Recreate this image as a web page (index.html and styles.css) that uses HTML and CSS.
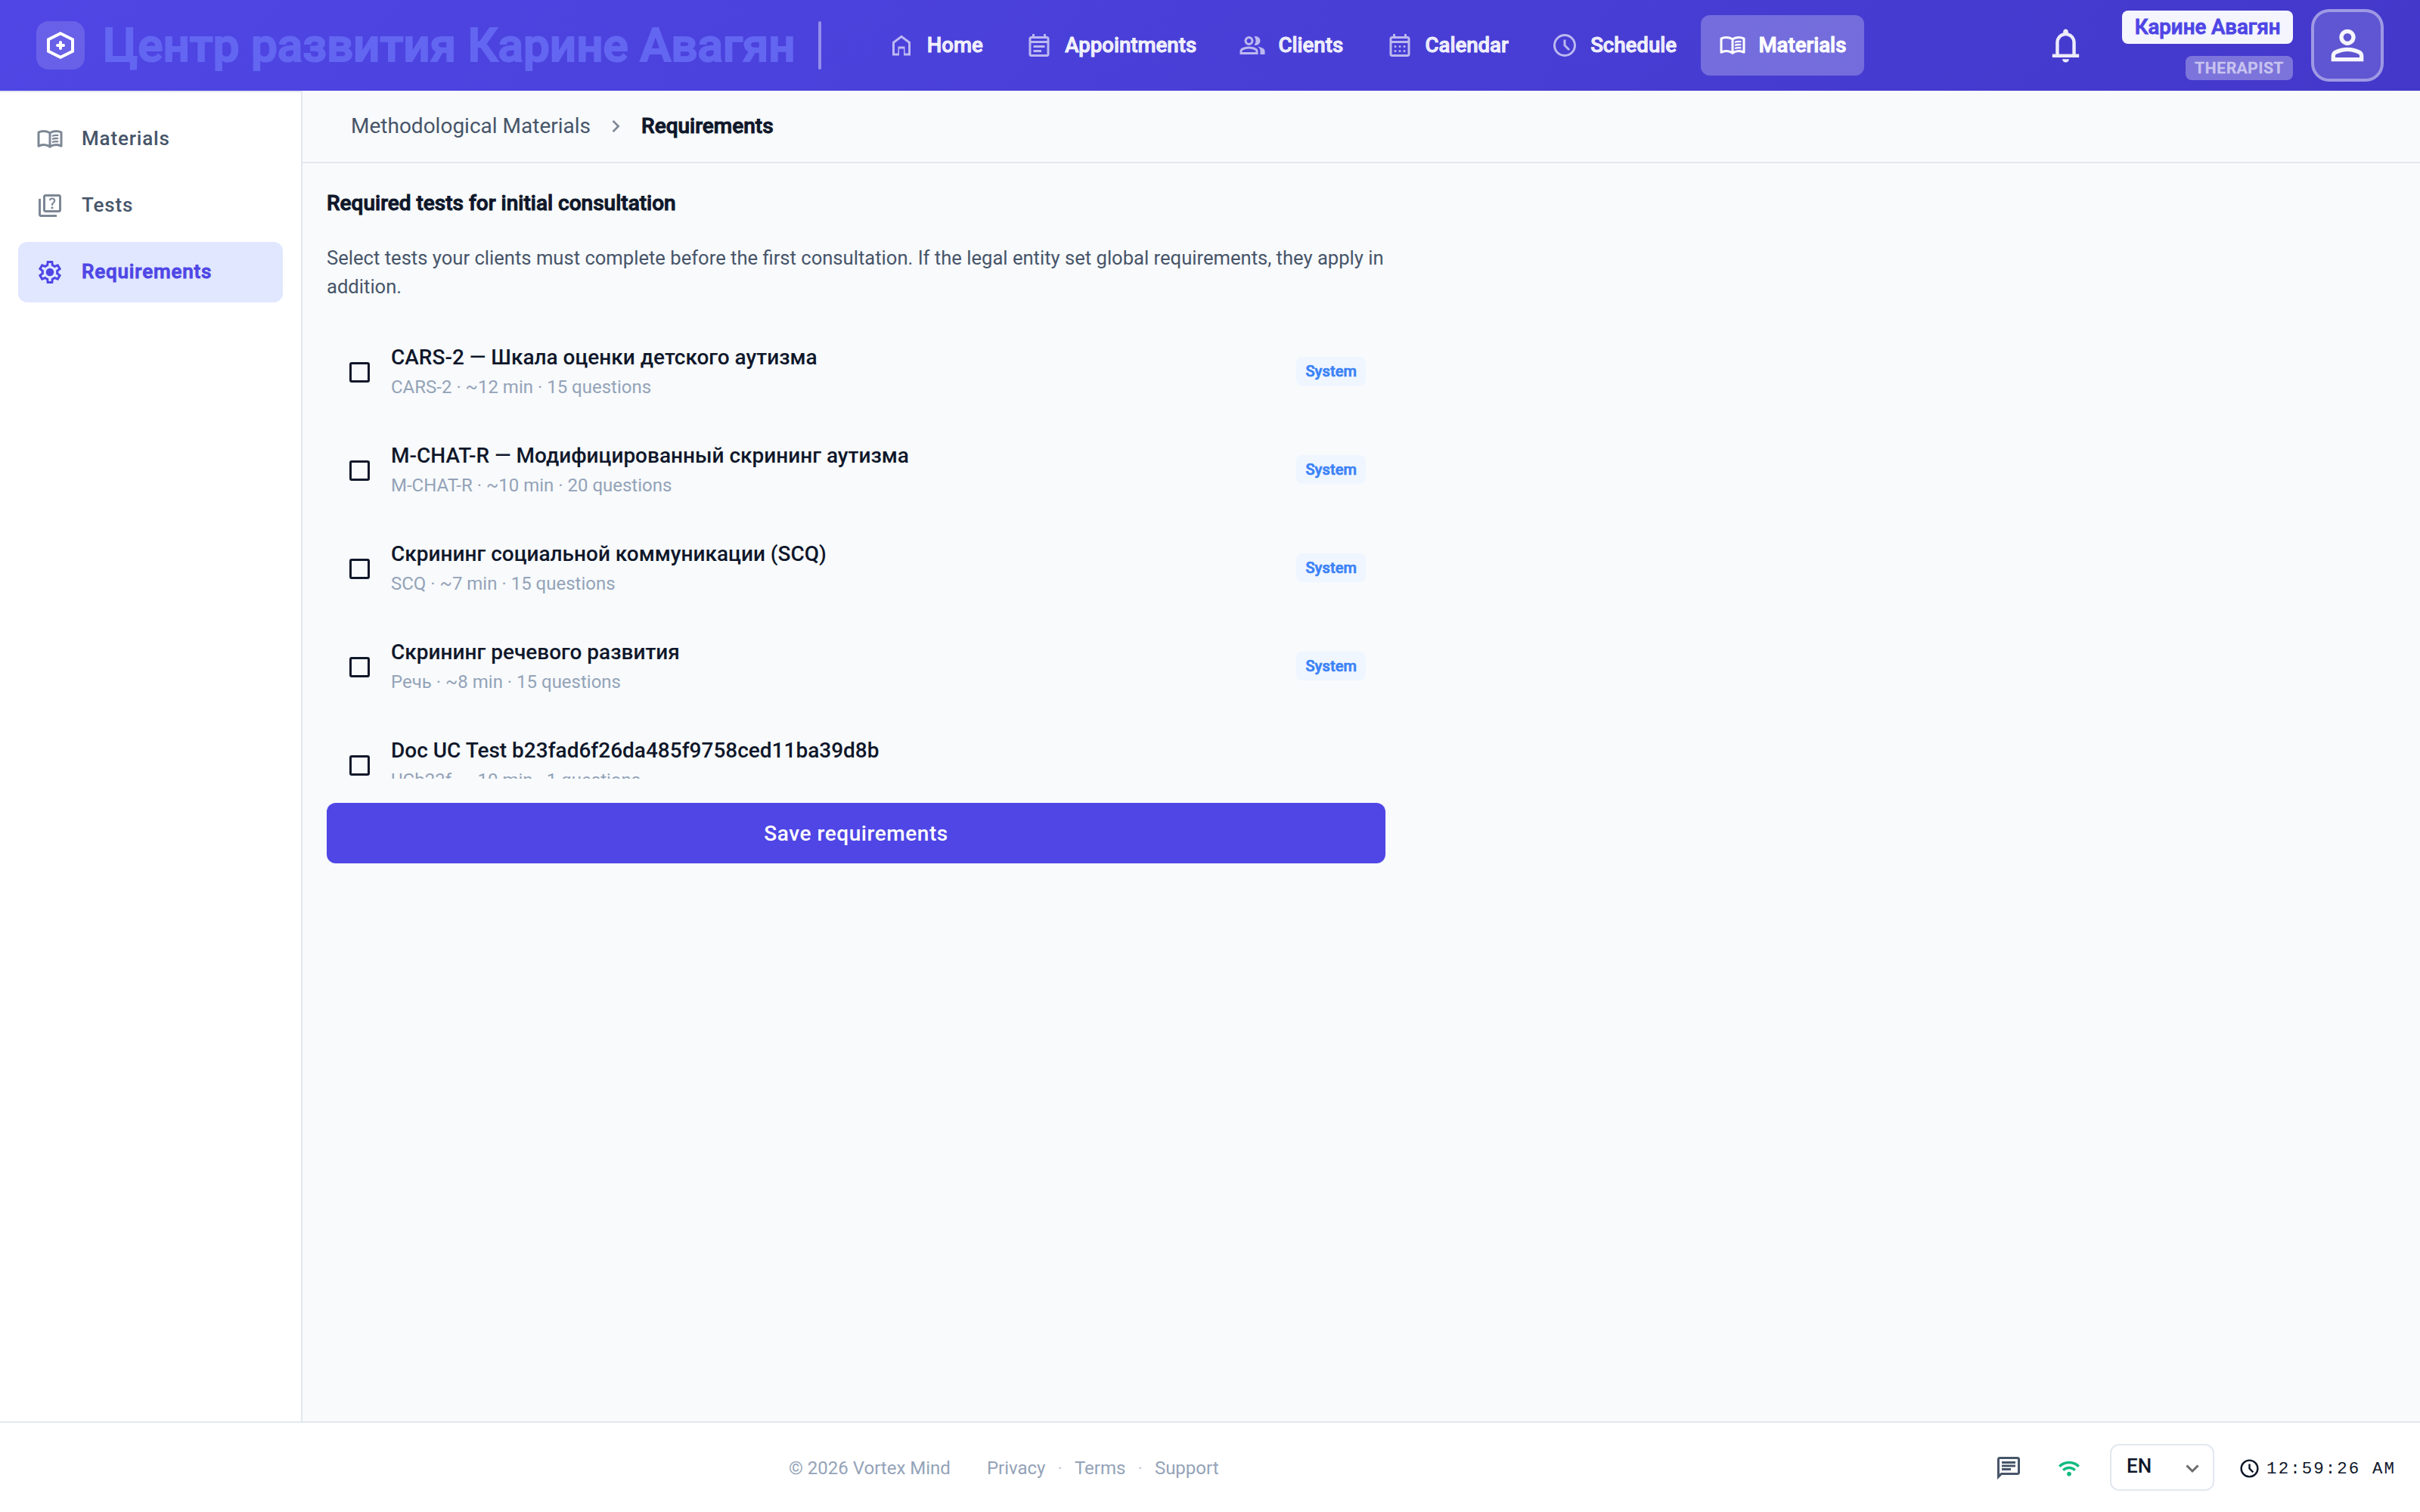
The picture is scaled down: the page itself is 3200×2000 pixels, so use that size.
FILE: index.html
```html
<!DOCTYPE html>
<html lang="en">
<head>
  <meta charset="UTF-8">
  <meta name="viewport" content="width=device-width, initial-scale=1.0">
  <title>Requirements</title>
  <link rel="stylesheet" href="styles.css">
</head>
<body>
  <header class="topbar">
    <div class="brand">
      <div class="brand-logo">
        <svg viewBox="0 0 36 36"><path d="M18 2.2 34 10.3v15.4l-16 8.1-16-8.1V10.3z"/><path d="M18 14v8M14 18h8"/></svg>
      </div>
      <span class="brand-name">Центр развития Карине Авагян</span>
      <span class="brand-divider"></span>
    </div>

    <nav class="main-nav">
      <a class="nav-item">
        <svg class="icon" viewBox="0 0 24 24"><path d="M6 19h3v-6h6v6h3v-9l-6-4.5L6 10zm-2 2V9l8-6l8 6v12h-6v-6h-4v6z"/></svg>
        <span>Home</span>
      </a>
      <a class="nav-item">
        <svg class="icon" viewBox="0 0 24 24"><path d="M5 22q-.825 0-1.412-.587T3 20V6q0-.825.588-1.412T5 4h1V2h2v2h8V2h2v2h1q.825 0 1.413.588T21 6v14q0 .825-.587 1.413T19 22zm0-2h14V10H5zM5 8h14V6H5zm2 6v-2h10v2zm0 4v-2h7v2z" fill-rule="evenodd"/></svg>
        <span>Appointments</span>
      </a>
      <a class="nav-item">
        <svg class="icon" viewBox="0 0 24 24"><path d="M1 20v-2.8q0-.85.438-1.562T2.6 14.55q1.55-.775 3.15-1.162T9 13t3.25.388t3.15 1.162q.725.375 1.163 1.088T17 17.2V20zm18 0v-3q0-1.1-.612-2.113T16.65 13.15q1.275.15 2.4.513t2.1.887q.9.5 1.375 1.112T23 17v3zM9 12q-1.65 0-2.825-1.175T5 8t1.175-2.825T9 4t2.825 1.175T13 8t-1.175 2.825T9 12m10-4q0 1.65-1.175 2.825T15 12q-.275 0-.7-.062t-.7-.138q.675-.8 1.038-1.775T15 8t-.362-2.025T13.6 4.2q.35-.125.7-.163T15 4q1.65 0 2.825 1.175T19 8M3 18h12v-.8q0-.275-.137-.5t-.363-.35q-1.35-.675-2.725-1.012T9 15t-2.775.338T3.5 16.35q-.225.125-.363.35T3 17.2zm6-8q.825 0 1.413-.587T11 8t-.587-1.412T9 6t-1.412.588T7 8t.588 1.413T9 10"/></svg>
        <span>Clients</span>
      </a>
      <a class="nav-item">
        <svg class="icon" viewBox="0 0 24 24"><path fill-rule="evenodd" d="M5 22q-.825 0-1.412-.587T3 20V6q0-.825.588-1.412T5 4h1V2h2v2h8V2h2v2h1q.825 0 1.413.588T21 6v14q0 .825-.587 1.413T19 22zm0-2h14V10H5zM5 8h14V6H5z"/><circle cx="8" cy="13" r="1"/><circle cx="12" cy="13" r="1"/><circle cx="16" cy="13" r="1"/><circle cx="8" cy="17" r="1"/><circle cx="12" cy="17" r="1"/><circle cx="16" cy="17" r="1"/></svg>
        <span>Calendar</span>
      </a>
      <a class="nav-item">
        <svg class="icon" viewBox="0 0 24 24"><path d="m15.3 16.7l1.4-1.4l-3.7-3.7V7h-2v5.4z"/><circle class="line" cx="12" cy="12" r="9" stroke-width="2"/></svg>
        <span>Schedule</span>
      </a>
      <a class="nav-item active">
        <svg class="icon" viewBox="0 0 24 24"><path d="M6.5 16q1.175 0 2.288.263T11 17.05V7.2q-1.025-.6-2.175-.9T6.5 6q-.9 0-1.788.175T3 6.7v9.9q.875-.3 1.738-.45T6.5 16m6.5 1.05q1.1-.525 2.213-.788T17.5 16q.9 0 1.763.15T21 16.6V6.7q-.825-.35-1.713-.525T17.5 6q-1.175 0-2.325.3T13 7.2zM12 20q-1.2-.95-2.6-1.475T6.5 18q-1.05 0-2.062.275T2.5 19.05q-.525.275-1.012-.025T1 18.15V6.1q0-.275.138-.525T1.55 5.2q1.15-.6 2.4-.9T6.5 4q1.45 0 2.838.375T12 5.5q1.275-.75 2.663-1.125T17.5 4q1.3 0 2.55.3t2.4.9q.275.125.413.375T23 6.1v12.05q0 .575-.487.875t-1.013.025q-.925-.5-1.937-.775T17.5 18q-1.5 0-2.9.525T12 20"/><path class="line" stroke-width="1.5" d="M14 9.3q2.6-1 5.5-.5M14 12q2.6-1 5.5-.5M14 14.7q2.6-1 5.5-.5"/></svg>
        <span>Materials</span>
      </a>
    </nav>

    <div class="account">
      <svg class="bell" viewBox="0 0 24 24"><path fill-rule="evenodd" d="M4 19v-2h2v-7q0-2.075 1.25-3.687T10.5 4.2v-.7q0-.625.438-1.062T12 2t1.063.438T13.5 3.5v.7q2 .5 3.25 2.113T18 10v7h2v2zm8 3q-.825 0-1.412-.587T10 20h4q0 .825-.587 1.413T12 22m-4-5h8v-7q0-1.65-1.175-2.825T12 6T9.175 7.175T8 10z"/></svg>
      <div class="account-info">
        <span class="account-name">Карине Авагян</span>
        <span class="account-role">THERAPIST</span>
      </div>
      <div class="avatar">
        <svg viewBox="0 0 24 24"><path d="M12 12q-1.65 0-2.825-1.175T8 8t1.175-2.825T12 4t2.825 1.175T16 8t-1.175 2.825T12 12m-8 8v-2.8q0-.85.438-1.562T5.6 14.55q1.55-.775 3.15-1.162T12 13t3.25.388t3.15 1.162q.725.375 1.163 1.088T20 17.2V20zm2-2h12v-.8q0-.275-.137-.5t-.363-.35q-1.35-.675-2.725-1.012T12 15t-2.775.338T6.5 16.35q-.225.125-.363.35T6 17.2zm6-8q.825 0 1.413-.587T14 8t-.587-1.412T12 6t-1.412.588T10 8t.588 1.413T12 10"/></svg>
      </div>
    </div>
  </header>

  <div class="workspace">
    <aside class="sidebar">
      <a class="side-item">
        <svg class="icon" viewBox="0 0 24 24"><path d="M6.5 16q1.175 0 2.288.263T11 17.05V7.2q-1.025-.6-2.175-.9T6.5 6q-.9 0-1.788.175T3 6.7v9.9q.875-.3 1.738-.45T6.5 16m6.5 1.05q1.1-.525 2.213-.788T17.5 16q.9 0 1.763.15T21 16.6V6.7q-.825-.35-1.713-.525T17.5 6q-1.175 0-2.325.3T13 7.2zM12 20q-1.2-.95-2.6-1.475T6.5 18q-1.05 0-2.062.275T2.5 19.05q-.525.275-1.012-.025T1 18.15V6.1q0-.275.138-.525T1.55 5.2q1.15-.6 2.4-.9T6.5 4q1.45 0 2.838.375T12 5.5q1.275-.75 2.663-1.125T17.5 4q1.3 0 2.55.3t2.4.9q.275.125.413.375T23 6.1v12.05q0 .575-.487.875t-1.013.025q-.925-.5-1.937-.775T17.5 18q-1.5 0-2.9.525T12 20"/><path class="line" stroke-width="1.5" d="M14 9.3q2.6-1 5.5-.5M14 12q2.6-1 5.5-.5M14 14.7q2.6-1 5.5-.5"/></svg>
        <span>Materials</span>
      </a>
      <a class="side-item">
        <svg class="icon" viewBox="0 0 24 24"><path d="M14 15q.425 0 .738-.312t.312-.738t-.312-.737T14 12.9t-.737.313t-.313.737t.313.738T14 15m-.75-3.2h1.5q0-.725.15-1.062t.7-.888q.75-.75 1-1.212t.25-1.088q0-1.125-.788-1.837T14 5q-1.025 0-1.787.575T11.15 7.1l1.35.55q.225-.625.613-.937T14 6.4q.6 0 .975.338t.375.912q0 .35-.2.663t-.7.787q-.825.725-1.012 1.138T13.25 11.8M8 18q-.825 0-1.412-.587T6 16V4q0-.825.588-1.412T8 2h12q.825 0 1.413.588T22 4v12q0 .825-.587 1.413T20 18zm0-2h12V4H8zm-4 6q-.825 0-1.412-.587T2 20V6h2v14h14v2z"/></svg>
        <span>Tests</span>
      </a>
      <a class="side-item active">
        <svg class="icon" viewBox="0 0 24 24"><path d="m9.25 22l-.4-3.2q-.325-.125-.612-.3t-.563-.375L4.7 19.375l-2.75-4.75l2.575-1.95Q4.5 12.5 4.5 12.338v-.675q0-.163.025-.338L1.95 9.375l2.75-4.75l2.975 1.25q.275-.2.575-.375t.6-.3l.4-3.2h5.5l.4 3.2q.325.125.613.3t.562.375l2.975-1.25l2.75 4.75l-2.575 1.95q.025.175.025.338v.674q0 .163-.05.338l2.575 1.95l-2.75 4.75l-2.95-1.25q-.275.2-.575.375t-.6.3l-.4 3.2zM11 20h1.975l.35-2.65q.775-.2 1.438-.587t1.212-.938l2.475 1.025l.975-1.7l-2.15-1.625q.125-.35.175-.737T17.5 12t-.05-.787t-.175-.738l2.15-1.625l-.975-1.7l-2.475 1.05q-.55-.575-1.212-.962t-1.438-.588L13 4h-1.975l-.35 2.65q-.775.2-1.437.588t-1.213.937L5.55 7.15l-.975 1.7l2.15 1.6q-.125.375-.175.75t-.05.8q0 .4.05.775t.175.75l-2.15 1.625l.975 1.7l2.475-1.05q.55.575 1.213.963t1.437.587z" fill-rule="evenodd"/><circle cx="12" cy="12" r="3.5"/></svg>
        <span>Requirements</span>
      </a>
    </aside>

    <main class="content">
      <div class="breadcrumbs">
        <span>Methodological Materials</span>
        <svg viewBox="0 0 24 24"><path d="M12.6 12 8 7.4 9.4 6l6 6-6 6L8 16.6z"/></svg>
        <strong>Requirements</strong>
      </div>

      <section class="requirements">
        <h2>Required tests for initial consultation</h2>
        <p class="hint">Select tests your clients must complete before the first consultation. If the legal entity set global requirements, they apply in addition.</p>

        <div class="test-list">
          <div class="test-row">
            <span class="checkbox"></span>
            <div class="test-info">
              <div class="test-title">CARS-2 — Шкала оценки детского аутизма</div>
              <div class="test-meta">CARS-2 · ~12 min · 15 questions</div>
            </div>
            <span class="badge">System</span>
          </div>
          <div class="test-row">
            <span class="checkbox"></span>
            <div class="test-info">
              <div class="test-title">M-CHAT-R — Модифицированный скрининг аутизма</div>
              <div class="test-meta">M-CHAT-R · ~10 min · 20 questions</div>
            </div>
            <span class="badge">System</span>
          </div>
          <div class="test-row">
            <span class="checkbox"></span>
            <div class="test-info">
              <div class="test-title">Скрининг социальной коммуникации (SCQ)</div>
              <div class="test-meta">SCQ · ~7 min · 15 questions</div>
            </div>
            <span class="badge">System</span>
          </div>
          <div class="test-row">
            <span class="checkbox"></span>
            <div class="test-info">
              <div class="test-title">Скрининг речевого развития</div>
              <div class="test-meta">Речь · ~8 min · 15 questions</div>
            </div>
            <span class="badge">System</span>
          </div>
          <div class="test-row">
            <span class="checkbox"></span>
            <div class="test-info">
              <div class="test-title">Doc UC Test b23fad6f26da485f9758ced11ba39d8b</div>
              <div class="test-meta">UCb23f · ~10 min · 1 questions</div>
            </div>
          </div>
        </div>

        <button class="save-btn">Save requirements</button>
      </section>
    </main>
  </div>

  <footer class="footer">
    <div class="footer-links">
      <span class="copyright">© 2026 Vortex Mind</span>
      <a>Privacy</a><i>·</i><a>Terms</a><i>·</i><a>Support</a>
    </div>
    <div class="footer-tools">
      <svg class="icon chat" viewBox="0 0 24 24"><path d="M6 14h8v-2H6zm0-3h12V9H6zm0-3h12V6H6zM2 22V4q0-.825.588-1.412T4 2h16q.825 0 1.413.588T22 4v12q0 .825-.587 1.413T20 18H6zm3.15-6H20V4H4v13.125z" fill-rule="evenodd"/></svg>
      <svg class="wifi" viewBox="0 0 24 24"><path d="M12 21q-1.05 0-1.775-.725T9.5 18.5t.725-1.775T12 16t1.775.725t.725 1.775t-.725 1.775T12 21m-5.65-5.65l-2.1-2.15q1.475-1.475 3.463-2.337T12 10t4.288.875t3.462 2.375l-2.1 2.1q-1.1-1.1-2.55-1.725T12 13t-3.1.625t-2.55 1.725M2.1 11.1L0 9q2.3-2.35 5.375-3.675T12 4t6.625 1.325T24 9l-2.1 2.1q-1.925-1.925-4.462-3.012T12 7T6.563 8.088T2.1 11.1"/></svg>
      <div class="lang">
        <span>EN</span>
        <svg viewBox="0 0 18 12"><path d="M1.5 1.5 9 9l7.5-7.5"/></svg>
      </div>
      <div class="clock">
        <svg viewBox="0 0 24 24"><path d="m15.3 16.7l1.4-1.4l-3.7-3.7V7h-2v5.4z"/><circle class="line" cx="12" cy="12" r="9" stroke-width="2"/></svg>
        <span>12:59:26 AM</span>
      </div>
    </div>
  </footer>
</body>
</html>
```
FILE: styles.css
```css
* {
  box-sizing: border-box;
}

body {
  margin: 0;
  height: 2000px;
  display: flex;
  flex-direction: column;
  font-family: Roboto, 'Liberation Sans', sans-serif;
  font-size: 28px;
  color: #0f172a;
  background-color: #f8fafc;
}

svg {
  display: block;
  flex: none;
  fill: currentColor;
}

.line {
  fill: none;
  stroke: currentColor;
}

.icon {
  width: 36px;
  height: 36px;
}

/* Heavy labels: medium weight thickened with a stroke */
.brand-name,
.nav-item span,
.account-name,
.account-role,
.side-item.active span,
.breadcrumbs strong,
.requirements h2,
.badge {
  font-weight: 500;
  -webkit-text-stroke: 0.035em currentColor;
}

/* Top bar */
.topbar {
  height: 120px;
  flex: none;
  display: flex;
  align-items: center;
  padding: 0 48px;
  background: linear-gradient(135deg, #4f46e5 0%, #4338ca 100%);
  color: #fff;
}

.brand {
  display: flex;
  align-items: center;
}

.brand-logo {
  width: 64px;
  height: 64px;
  border-radius: 16px;
  background-color: rgba(255, 255, 255, 0.15);
  display: flex;
  align-items: center;
  justify-content: center;
}

.brand-logo svg {
  width: 36px;
  height: 36px;
  fill: none;
  stroke: #fff;
  stroke-width: 4;
}

.brand-logo path + path {
  stroke-linecap: round;
}

.brand-name {
  margin-left: 24px;
  font-size: 62px;
  line-height: 64px;
  color: #6366f1;
  white-space: nowrap;
}

.brand-divider {
  width: 4px;
  height: 64px;
  margin-left: 30px;
  border-radius: 2px;
  background-color: rgba(255, 255, 255, 0.4);
}

.main-nav {
  display: flex;
  gap: 8.4px;
  margin-left: 64px;
}

.nav-item {
  height: 80px;
  padding: 0 24px;
  border-radius: 12px;
  display: flex;
  align-items: center;
  gap: 16px;
  font-size: 27.6px;
  color: rgba(255, 255, 255, 0.9);
}

.nav-item span,
.side-item span,
.breadcrumbs span,
.breadcrumbs strong {
  margin-bottom: 2px;
}

.nav-item .icon {
  opacity: 0.7;
}

.nav-item.active {
  background-color: rgba(255, 255, 255, 0.25);
  color: #fff;
}

.nav-item.active .icon {
  opacity: 1;
}

.account {
  margin-left: auto;
  display: flex;
  align-items: center;
}

.bell {
  width: 53px;
  height: 53px;
  margin-right: 48px;
  color: rgba(255, 255, 255, 0.9);
}

.account-info {
  display: flex;
  flex-direction: column;
  align-items: flex-end;
  gap: 16px;
  margin-right: 24px;
}

.account-name {
  height: 44px;
  line-height: 44px;
  padding: 0 16.5px;
  border-radius: 8px;
  background-color: rgba(255, 255, 255, 0.95);
  color: #4f46e5;
  font-size: 27.6px;
}

.account-role {
  height: 32px;
  line-height: 32px;
  padding: 0 12px;
  border-radius: 8px;
  background-color: rgba(255, 255, 255, 0.3);
  color: #c8c3f0;
  font-size: 20.8px;
  letter-spacing: 0.8px;
}

.avatar {
  width: 96px;
  height: 96px;
  border: 4px solid rgba(255, 255, 255, 0.4);
  border-radius: 24px;
  background-color: rgba(255, 255, 255, 0.15);
  display: flex;
  align-items: center;
  justify-content: center;
}

.avatar svg {
  width: 64px;
  height: 64px;
  opacity: 0.95;
}

/* Page body */
.workspace {
  flex: 1;
  display: flex;
  min-height: 0;
}

.sidebar {
  width: 400px;
  padding: 22px 24px;
  border-top: 2px solid #e2e8f0;
  border-right: 2px solid #e2e8f0;
  background-color: #fff;
  display: flex;
  flex-direction: column;
  gap: 8px;
}

.side-item {
  height: 80px;
  padding: 0 24px;
  border-radius: 12px;
  display: flex;
  align-items: center;
  gap: 24px;
  font-size: 26px;
  font-weight: 500;
  letter-spacing: 0.85px;
  color: #475569;
}

.side-item .icon {
  opacity: 0.7;
}

.side-item.active {
  background-color: #e0e7ff;
  color: #4f46e5;
}

.side-item.active .icon {
  opacity: 1;
}

.content {
  flex: 1;
}

.breadcrumbs {
  height: 96px;
  padding: 0 64px;
  border-bottom: 2px solid #e2e8f0;
  display: flex;
  align-items: center;
  color: #475569;
}

.breadcrumbs svg {
  width: 32px;
  height: 32px;
  margin: 0 17px 0 18px;
  opacity: 0.7;
}

.breadcrumbs strong {
  color: #0f172a;
}

.requirements {
  width: 1400px;
  margin: 33px 32px;
}

.requirements h2 {
  margin: 0;
  font-size: 28px;
  line-height: 40px;
}

.hint {
  margin: 33px 0 0;
  font-size: 25.6px;
  line-height: 38px;
  color: #475569;
}

.test-list {
  height: 603px;
  margin-top: 29px;
  overflow: hidden;
}

.test-row {
  height: 130px;
  padding: 0 26px 0 30px;
  display: flex;
  align-items: center;
}

.checkbox {
  width: 27px;
  height: 27px;
  border: 3px solid #0f172a;
  border-radius: 3px;
}

.test-info {
  flex: 1;
  margin-left: 28px;
}

.test-title {
  font-weight: 500;
  line-height: 38px;
  margin-bottom: 2px;
}

.test-meta {
  font-size: 24px;
  line-height: 36px;
  color: #94a3b8;
}

.badge {
  height: 38px;
  line-height: 38px;
  margin-bottom: 2px;
  padding: 0 12px;
  border-radius: 8px;
  background-color: #eff6ff;
  color: #3b82f6;
  font-size: 20px;
  letter-spacing: 0.1px;
}

.save-btn {
  width: 100%;
  height: 80px;
  margin-top: 32px;
  border: 0;
  border-radius: 12px;
  background-color: #4f46e5;
  color: #fff;
  font: 500 28px Roboto, sans-serif;
  letter-spacing: 0.56px;
}

/* Footer */
.footer {
  height: 120px;
  flex: none;
  padding: 2px 32px 0 1043px;
  border-top: 2px solid #e2e8f0;
  background-color: #fff;
  display: flex;
  align-items: center;
  justify-content: space-between;
}

.footer-links {
  display: flex;
  font-size: 24px;
  color: #94a3b8;
}

.footer-links i {
  width: 38.5px;
  text-align: center;
  font-style: normal;
  opacity: 0.6;
}

.copyright {
  margin-right: 48px;
}

.footer-tools {
  display: flex;
  align-items: center;
}

.chat {
  color: #475569;
}

.wifi {
  width: 28px;
  height: 28px;
  margin-left: 48px;
  color: #10b981;
}

.lang {
  width: 138px;
  height: 62px;
  margin: 0 0 2px 40px;
  padding: 0 18px 0 20px;
  border: 2px solid #e2e8f0;
  border-radius: 12px;
  display: flex;
  align-items: center;
  justify-content: space-between;
  font-size: 26px;
  font-weight: 500;
}

.lang span {
  margin-bottom: 4px;
}

.lang svg {
  width: 18px;
  height: 12px;
  margin-top: 4px;
  fill: none;
  stroke: #6b6b6b;
  stroke-width: 3;
}

.clock {
  display: flex;
  align-items: center;
  gap: 8px;
  margin-left: 32px;
  font-family: 'Liberation Mono', 'Courier New', monospace;
  font-size: 22.4px;
  letter-spacing: 2.1px;
}

.clock span {
  margin-top: 2px;
}

.clock svg {
  width: 29px;
  height: 29px;
}
```
